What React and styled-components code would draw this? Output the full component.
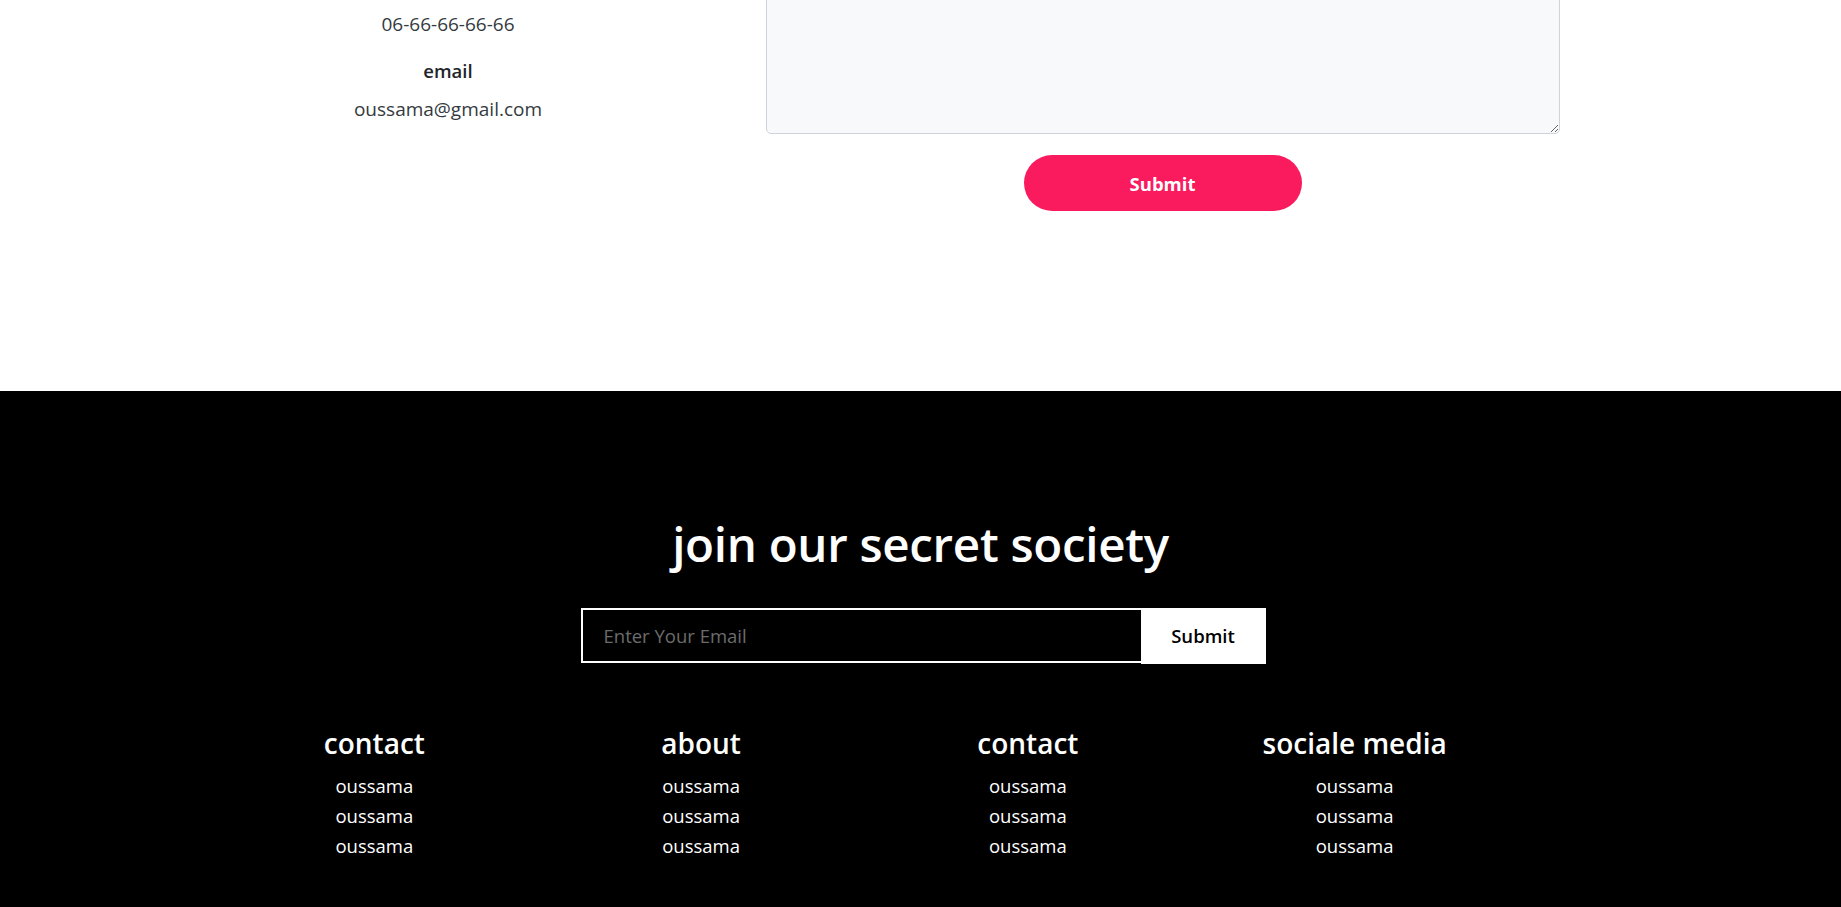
import React from "react";
import styled, { createGlobalStyle } from "styled-components";

const GlobalStyle = createGlobalStyle`
  html, body { margin: 0; padding: 0; }
  body {
    font-family: "Open Sans", "Noto Sans", "Liberation Sans", sans-serif;
    color: #212529;
    background: #ffffff;
    overflow: hidden;
  }
  * { box-sizing: border-box; }
`;

const ContactSection = styled.section`
  display: grid;
  grid-template-columns: 375px 794px;
  column-gap: 130px;
  width: 1320px;
  height: 391px;
  margin: 0 auto;
  align-items: start;
`;

const InfoColumn = styled.div`
  display: flex;
  flex-direction: column;
  align-items: center;
  text-align: center;
  padding-top: 10px;
`;

const InfoLabel = styled.div`
  font-size: 18.5px;
  line-height: 28.8px;
  font-weight: 600;
  margin-top: 18px;
`;

const InfoValue = styled.div`
  font-size: 19px;
  line-height: 28.8px;
  font-weight: 400;
  color: #343a40;
  margin-top: ${(p) => p.$gap || 0}px;
`;

const FormColumn = styled.div`
  display: flex;
  flex-direction: column;
  align-items: center;
`;

const MessageArea = styled.textarea`
  width: 100%;
  height: 200px;
  margin-top: -66px;
  background: #f8f9fa;
  border: 1px solid #ced4da;
  border-radius: 5px;
  padding: 10px 14px;
  font-family: inherit;
  font-size: 18px;
  resize: vertical;
  outline: none;
  &::placeholder { color: #6c757d; }
`;

const PinkButton = styled.button`
  margin-top: 21px;
  width: 278px;
  height: 56px;
  border: none;
  border-radius: 28px;
  background: #fa1b5e;
  color: #ffffff;
  font-family: inherit;
  font-size: 18.5px;
  font-weight: 700;
  cursor: pointer;
`;

const Footer = styled.footer`
  background: #000000;
  color: #ffffff;
  min-height: 516px;
  padding-top: 124px;
  padding-bottom: 40px;
`;

const FooterTitle = styled.h2`
  margin: 0;
  text-align: center;
  font-size: 47.5px;
  line-height: 57.6px;
  font-weight: 600;
  letter-spacing: -0.3px;
`;

const SubscribeForm = styled.form`
  display: flex;
  justify-content: center;
  align-items: flex-start;
  margin-top: 35px;
  padding-left: 5px;
`;

const EmailInput = styled.input`
  width: 567px;
  height: 55px;
  background: #000000;
  border: 2px solid #ffffff;
  color: #ffffff;
  padding: 0 21px;
  font-family: inherit;
  font-size: 18.5px;
  outline: none;
  &::placeholder { color: #6c6c6c; }
`;

const SubscribeButton = styled.button`
  width: 125px;
  height: 56px;
  margin-left: -7px;
  border: none;
  background: #ffffff;
  color: #000000;
  font-family: inherit;
  font-size: 18.5px;
  font-weight: 600;
  cursor: pointer;
`;

const LinkColumns = styled.div`
  display: grid;
  grid-template-columns: repeat(4, 1fr);
  width: 1307px;
  margin: 63px 0 0 211px;
`;

const LinkColumn = styled.div`
  display: flex;
  flex-direction: column;
  align-items: center;
  text-align: center;
`;

const ColumnTitle = styled.h3`
  margin: 0 0 11px;
  font-size: 28px;
  line-height: 33.6px;
  font-weight: 600;
`;

const ColumnList = styled.ul`
  list-style: none;
  margin: 0;
  padding: 0;
`;

const ColumnItem = styled.li`
  font-size: 18.5px;
  line-height: 29.7px;
  font-weight: 400;
`;

const columns = ["contact", "about", "contact", "sociale media"];

export default function App() {
  return (
    <>
      <GlobalStyle />
      <ContactSection>
        <InfoColumn>
          <InfoValue>06-66-66-66-66</InfoValue>
          <InfoLabel>email</InfoLabel>
          <InfoValue $gap={9}>oussama@gmail.com</InfoValue>
        </InfoColumn>
        <FormColumn>
          <MessageArea aria-label="message" />
          <PinkButton type="button">Submit</PinkButton>
        </FormColumn>
      </ContactSection>
      <Footer>
        <FooterTitle>join our secret society</FooterTitle>
        <SubscribeForm onSubmit={(e) => e.preventDefault()}>
          <EmailInput type="email" placeholder="Enter Your Email" />
          <SubscribeButton type="submit">Submit</SubscribeButton>
        </SubscribeForm>
        <LinkColumns>
          {columns.map((title, i) => (
            <LinkColumn key={i}>
              <ColumnTitle>{title}</ColumnTitle>
              <ColumnList>
                <ColumnItem>oussama</ColumnItem>
                <ColumnItem>oussama</ColumnItem>
                <ColumnItem>oussama</ColumnItem>
              </ColumnList>
            </LinkColumn>
          ))}
        </LinkColumns>
      </Footer>
    </>
  );
}
